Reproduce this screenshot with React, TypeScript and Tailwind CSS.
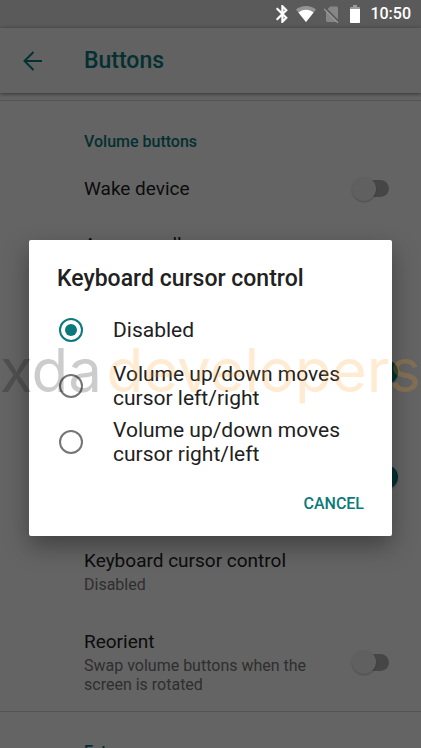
import React, { useState } from "react";
import clsx from "clsx";

const OPTIONS = [
  "Disabled",
  "Volume up/down moves cursor left/right",
  "Volume up/down moves cursor right/left",
];

function StatusBar() {
  return (
    <div className="relative z-20 flex h-7 items-center justify-end pr-[10px] text-white">
      <svg width="12" height="18" viewBox="5 2 13 20" fill="currentColor" className="mr-2">
        <path d="M17.71 7.71L12 2h-1v7.59L6.41 5 5 6.41 10.59 12 5 17.59 6.41 19 11 14.41V22h1l5.71-5.71-4.3-4.29 4.3-4.29zM13 5.83l1.88 1.88L13 9.59V5.83zm1.88 10.46L13 18.17v-3.76l1.88 1.88z" stroke="currentColor" strokeWidth="0.5" />
      </svg>
      <svg width="20" height="18" viewBox="0 0 20 18" fill="currentColor" className="mr-2">
        <path d="M10 17L0 4.600C2.600 2.400 6 1 10 1s7.400 1.400 10 3.600z" opacity="0.35" />
        <path d="M10 17L2.400 7.500C4.400 5.800 7 4.700 10 4.700s5.600 1.100 7.600 2.800z" />
      </svg>
      <svg width="16" height="17" viewBox="0 0 16 17" className="mr-[10px]">
        <path d="M2.400 4.300L6.200 0.500H12.500Q14 0.500 14 2V16H3.400Q2 16 2 14.600V5z" fill="#868686" />
        <path d="M0 2.800L14 16.800" stroke="#9a9a9a" strokeWidth="1.300" />
        <path d="M1 1.600L15 15.600" stroke="#5a5a5a" strokeWidth="1.500" />
      </svg>
      <svg width="10" height="18" viewBox="0 0 10 18" fill="currentColor" className="mr-[10px]">
        <path d="M3 0h4v2h2.200q.8 0 .8.8V4H0V2.800Q0 2 .8 2H3z" opacity="0.4" />
        <path d="M0 4h10v13.200q0 .8-.8.8H.8q-.8 0-.8-.8z" />
      </svg>
      <span className="text-base leading-5 font-medium">10:50</span>
    </div>
  );
}

function Switch({ id, label, defaultChecked }: { id: string; label?: string; defaultChecked?: boolean }) {
  return (
    <input
      id={id}
      type="checkbox"
      role="switch"
      aria-label={label}
      defaultChecked={defaultChecked}
      className={clsx(
        "flex h-6 w-[46px] shrink-0 appearance-none items-center",
        "before:mx-2 before:h-[17px] before:w-[29px] before:rounded-full before:bg-[#b0b0b0] checked:before:bg-[#8fbfc0]",
        "after:-ml-[45px] after:size-6 after:rounded-full after:bg-[#f1f1f1] after:shadow-[0_1px_2px_rgba(0,0,0,0.25)]",
        "checked:after:-ml-[23px] checked:after:bg-[#0a797b]",
      )}
    />
  );
}

function PreferenceRow({
  id,
  title,
  summary,
  className,
  children,
}: {
  id?: string;
  title?: string;
  summary?: string;
  className?: string;
  children?: React.ReactNode;
}) {
  return (
    <div className={clsx("flex shrink-0 pl-[84px] pr-[23px]", className)}>
      <div className="flex-1 pr-8">
        {title && <label htmlFor={id} className="block text-[19px] leading-6 text-[#212121]">{title}</label>}
        {summary && <p className="mt-[2px] text-base leading-[19px] text-[#757575]">{summary}</p>}
      </div>
      {children}
    </div>
  );
}

function SettingsPage() {
  return (
    <div className="absolute inset-0 flex flex-col overflow-hidden bg-[#fafafa]">
      <div className="h-7 shrink-0 bg-[#e0e0e0]" />
      <header className="flex h-[65px] shrink-0 items-center bg-[#f5f5f5] pl-[21px] shadow-[0_1px_4px_rgba(0,0,0,0.5)]">
        <button aria-label="Back" className="mr-[39px] text-[#0a797b]">
          <svg width="24" height="24" viewBox="0 0 24 24" fill="none" stroke="currentColor" strokeWidth="2">
            <path d="M21 12H4M12.500 3L3.500 12l9 9" />
          </svg>
        </button>
        <h1 className="text-[23px] leading-8 font-medium text-[#0a797b]">Buttons</h1>
      </header>
      <main className="mt-[7px] flex flex-col border-t border-[#d0d0d0]">
        <h2 className="h-[57px] shrink-0 pl-[84px] pt-[31px] text-base leading-5 font-medium text-[#0a797b]">Volume buttons</h2>
        <PreferenceRow id="wake" title="Wake device" className="h-[61px] items-center">
          <Switch id="wake" />
        </PreferenceRow>
        <PreferenceRow title="Answer call" className="h-[100px] items-start pt-[14px]" />
        <PreferenceRow className="h-[106px] items-center">
          <Switch id="playback" label="Playback control" defaultChecked />
        </PreferenceRow>
        <PreferenceRow className="h-[104px] items-center">
          <Switch id="ringtone" label="Ringtone control" defaultChecked />
        </PreferenceRow>
        <PreferenceRow title="Keyboard cursor control" summary="Disabled" className="h-[84px] items-center" />
        <PreferenceRow id="reorient" title="Reorient" summary="Swap volume buttons when the screen is rotated" className="h-[98px] items-center">
          <Switch id="reorient" />
        </PreferenceRow>
        <h2 className="shrink-0 border-t border-[#d0d0d0] pl-[84px] pt-[30px] text-base leading-5 font-medium text-[#0a797b]">Extras</h2>
      </main>
    </div>
  );
}

function CursorDialog() {
  const [selected, setSelected] = useState(0);

  return (
    <div
      role="dialog"
      aria-labelledby="dialog-title"
      className="w-full rounded-xs bg-white pb-2 shadow-[0_10px_24px_rgba(0,0,0,0.35)]"
    >
      <h2 id="dialog-title" className="px-7 pt-[25px] pb-[9px] text-[23px] leading-7 font-medium text-[#212121]">
        Keyboard cursor control
      </h2>
      {OPTIONS.map((option, i) => (
        <label key={option} className="flex h-14 items-center pl-[30px] pr-7 text-[21px] leading-6 text-[#212121]">
          <input
            type="radio"
            name="cursor-control"
            checked={selected === i}
            onChange={() => setSelected(i)}
            className="mr-[30px] flex size-6 shrink-0 appearance-none items-center justify-center rounded-full border-2 border-[#757575] before:size-3 before:rounded-full checked:border-[#0a797b] checked:before:bg-[#0a797b]"
          />
          {option}
        </label>
      ))}
      <div className="flex justify-end pt-[10px] pr-[18px]">
        <button className="h-12 px-[10px] text-base font-medium text-[#0a797b]">CANCEL</button>
      </div>
    </div>
  );
}

export default function App() {
  return (
    <div className="relative flex h-screen flex-col overflow-hidden font-[Roboto,sans-serif]">
      <SettingsPage />
      <div className="absolute inset-0 bg-black/60" />
      <StatusBar />
      <div className="relative z-10 flex flex-1 items-center px-[29px]">
        <CursorDialog />
      </div>
      <div className="pointer-events-none absolute inset-x-0 top-[332px] z-30 flex justify-between font-[Inter,sans-serif] text-[60px] leading-[76px] whitespace-nowrap">
        <span className="text-black/20">xda</span>
        <span className="text-[#ff9a1f]/20">developers</span>
      </div>
    </div>
  );
}
